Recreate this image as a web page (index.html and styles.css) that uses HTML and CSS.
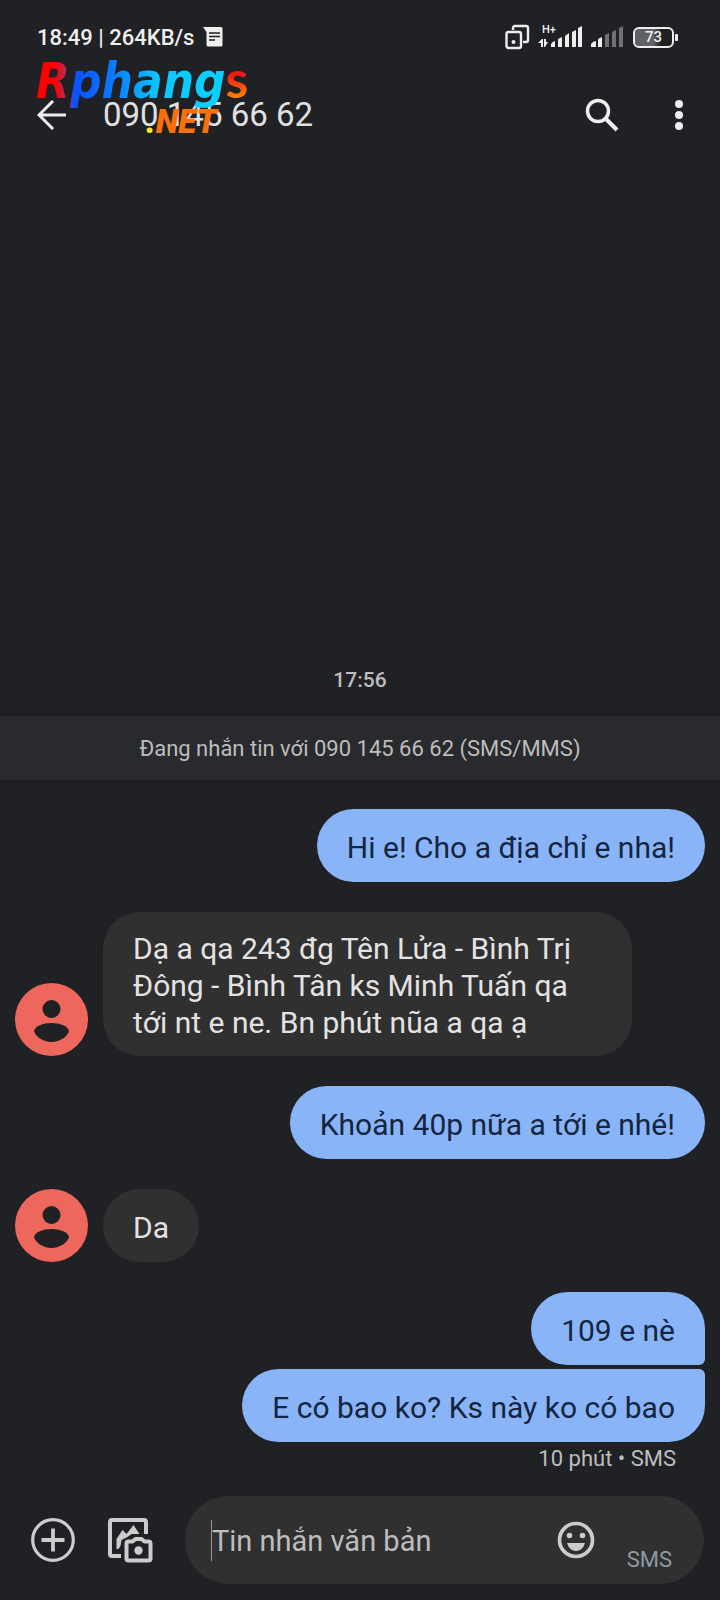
FILE: index.html
```html
<!DOCTYPE html>
<html lang="vi">
<head>
<meta charset="utf-8">
<meta name="viewport" content="width=device-width, initial-scale=1">
<title>090 145 66 62</title>
<link rel="stylesheet" href="styles.css">
</head>
<body>
<div class="phone">
  <div class="status">
    <span>18:49 | 264KB/s</span>
    <svg class="status-note" width="20" height="20" viewBox="0 0 20 20"><path fill="#eee" d="M0 0h18a1.500 1.500 0 0 1 1.500 1.500v16.500a1.500 1.500 0 0 1-1.500 1.500h-13a1.500 1.500 0 0 1-1.500-1.500v-13z"/><path stroke="#202124" stroke-width="1.500" d="M6 6h11M6 9.500h11M6 13h6"/></svg>
    <div class="status-icons">
      <svg width="25" height="26" viewBox="0 0 25 26" fill="none" stroke="#eee" stroke-width="2.400"><path d="M8 6V4q0-2 2-2h11q2 0 2 2v12q0 2-2 2h-3"/><rect x="1.500" y="8" width="14.500" height="16" rx="2"/><circle cx="8.500" cy="18" r="1" fill="#eee" stroke-width="2"/></svg>
      <div class="network">
        <span class="network-type">H+</span>
        <svg width="45" height="22" viewBox="0 0 45 22" fill="#eee"><path d="M0 17l4-4h1v8H3v-4zM6 13h2v3h2l-3 5H6zM13 18q2-3 4-3v6h-4zM20 13l4-2v10h-4zM27 10l4-3v14h-4zM34 6l4-2v17h-4zM40 2l4-2v21h-4z"/></svg>
      </div>
      <svg width="33" height="22" viewBox="0 0 33 22" fill="#eee"><path d="M0 18q2-3 5-3v6H0zM7 13l4-2v10H7z"/><path fill="#707173" d="M14 9l4-2v14h-4zM21 6l4-2v17h-4zM28 2l4-2v21h-4z"/></svg>
      <div class="battery">73</div>
    </div>
  </div>

  <header class="bar">
    <button class="icon-button" aria-label="Quay lại"><svg width="30" height="30" viewBox="0 0 30 30" fill="none" stroke="#eee" stroke-width="3"><path d="M29 15H2M16 1L2 15l14 14"/></svg></button>
    <h1 class="contact">090 145 66 62</h1>
    <button class="icon-button" aria-label="Tìm kiếm"><svg width="34" height="34" viewBox="0 0 34 34" fill="none" stroke="#eee"><circle cx="13" cy="13" r="10.500" stroke-width="3.500"/><path stroke-width="4" d="M20.500 20.500l11.500 11.500"/></svg></button>
    <button class="icon-button menu" aria-label="Tùy chọn khác"><svg width="8" height="32" viewBox="0 0 8 32" fill="#eee"><circle cx="4" cy="5" r="4"/><circle cx="4" cy="16" r="4"/><circle cx="4" cy="27" r="4"/></svg></button>
    <div class="logo"><span class="logo-name">Rphang</span><span class="logo-end">s</span><span class="logo-net"><span class="logo-dot">.</span>NET</span></div>
  </header>

  <main class="chat">
    <time class="time">17:56</time>
    <p class="notice">Đang nhắn tin với 090 145 66 62 (SMS/MMS)</p>
    <div class="messages">
      <p class="bubble sent">Hi e! Cho a địa chỉ e nha!</p>
      <div class="received">
        <svg class="avatar" viewBox="0 0 73 73"><circle cx="36.500" cy="36.500" r="36.500" fill="#ee675c"/><circle cx="36.500" cy="26" r="9" fill="#202124"/><path fill="#202124" d="M19 48C20 43 28 40 36.500 40S53 43 54 48C53 53 45 59 36.500 59S20 53 19 48z"/></svg>
        <p class="bubble">Dạ a qa 243 đg Tên Lửa - Bình Trị Đông - Bình Tân ks Minh Tuấn qa tới nt e ne. Bn phút nũa a qa ạ</p>
      </div>
      <p class="bubble sent">Khoản 40p nữa a tới e nhé!</p>
      <div class="received">
        <svg class="avatar" viewBox="0 0 73 73"><circle cx="36.500" cy="36.500" r="36.500" fill="#ee675c"/><circle cx="36.500" cy="26" r="9" fill="#202124"/><path fill="#202124" d="M19 48C20 43 28 40 36.500 40S53 43 54 48C53 53 45 59 36.500 59S20 53 19 48z"/></svg>
        <p class="bubble">Da</p>
      </div>
      <div class="group">
        <p class="bubble sent first">109 e nè</p>
        <p class="bubble sent last">E có bao ko? Ks này ko có bao</p>
        <p class="meta">10 phút • SMS</p>
      </div>
    </div>
  </main>

  <footer class="compose">
    <button class="icon-button" aria-label="Thêm"><svg width="44" height="44" viewBox="0 0 44 44" fill="none" stroke="#ccc"><circle cx="22" cy="22" r="20.300" stroke-width="3.200"/><path stroke-width="3.800" d="M22 10.500v23M10.500 22h23"/></svg></button>
    <button class="icon-button gallery" aria-label="Thư viện ảnh"><svg width="45" height="45" viewBox="0 0 45 45" fill="none" stroke="#ccc" stroke-width="4" stroke-linejoin="round"><path d="M38 16V4q0-2-2-2H4Q2 2 2 4v32q0 2 2 2h9"/><path fill="#ccc" stroke="none" d="M8.500 31V21l6-9 4 4 7-9 6 9h-8l-4 3-6 3-1 6-2 3z"/><path d="M18.500 25.500q0-2 2-2h4l3-2.500h6l3 2.500h4q2 0 2 2v15q0 2-2 2h-20q-2 0-2-2z"/><circle cx="30.500" cy="32.500" r="4.200" fill="#ccc" stroke="none"/></svg></button>
    <div class="field">
      <input class="input" type="text" placeholder="Tin nhắn văn bản" aria-label="Tin nhắn văn bản">
      <button class="icon-button" aria-label="Biểu tượng cảm xúc"><svg width="38" height="38" viewBox="0 0 38 38" fill="#ccc"><circle cx="19" cy="19" r="16.500" fill="none" stroke="#ccc" stroke-width="3.700"/><circle cx="12.500" cy="14.500" r="2.800"/><circle cx="25.500" cy="14.500" r="2.800"/><path d="M10 22h18q-2.500 8-9 8t-9-8z"/></svg></button>
      <button class="send">SMS</button>
    </div>
  </footer>
</div>
</body>
</html>
```
FILE: styles.css
```css
* { box-sizing: border-box; }
body { margin: 0; background: #202124; color: #e8e8e8; font-family: Roboto, "Noto Sans", sans-serif; }
h1, p { margin: 0; font-weight: 400; }
svg { display: block; flex: none; }
button { border: 0; padding: 0; background: none; color: inherit; font: inherit; }
.phone { display: flex; flex-direction: column; min-height: 100vh; }

.status { display: flex; align-items: center; height: 74px; padding: 0 42px 0 37px; font-size: 22px; font-weight: 500; color: #eee; }
.status-note { margin-left: 9px; }
.status-icons { display: flex; align-items: center; gap: 8px; margin-left: auto; }
.network { position: relative; }
.network-type { position: absolute; left: 4px; top: -2px; font-size: 11px; line-height: 11px; }
.battery { position: relative; width: 41px; height: 21px; margin: 0 4px 0 1px; border: 2px solid #eee; border-radius: 6px; background: linear-gradient(90deg, #606163 50%, #202124 70%) padding-box; font-size: 15px; line-height: 17px; font-weight: 500; text-align: center; }
.battery::after { content: ""; position: absolute; right: -6px; top: 5px; width: 3px; height: 7px; border-radius: 1px; background: #eee; }

.bar { position: relative; display: flex; align-items: center; height: 82px; padding: 0 37px; }
.contact { flex: 1; margin-left: 36px; font-size: 33px; line-height: 40px; color: #e0e0e0; }
.menu { margin-left: 56px; }
.logo { position: absolute; left: 36px; top: -26px; height: 82px; font-family: "DejaVu Sans Condensed", "DejaVu Sans", sans-serif; font-weight: 700; line-height: 60px; white-space: nowrap; }
.logo-name { font-size: 49px; font-style: italic; color: transparent; background: linear-gradient(90deg, #f00 10%, #b03058 16%, #0a50ff 20%, #0a78ff 40%, #0cc8ff 65%, #0cd0ff); background-clip: text; -webkit-background-clip: text; }
.logo-end { font-family: Lato, sans-serif; font-size: 52px; color: transparent; background: linear-gradient(#f01818 45%, #ff8000 80%); background-clip: text; -webkit-background-clip: text; }
.logo-net { position: absolute; left: 110px; top: 54px; font-family: Roboto, sans-serif; font-size: 33px; line-height: 40px; font-weight: 900; font-style: italic; color: #f97006; }
.logo-dot { color: #ffe92e; }

.chat { flex: 1; display: flex; flex-direction: column; justify-content: flex-end; }
.time { margin-bottom: 22px; text-align: center; font-size: 21px; line-height: 28px; font-weight: 500; color: #bdbdbd; }
.notice { padding: 19px 18px 17px; background: #292a2d; text-align: center; font-size: 22px; line-height: 28px; color: #bdbdbd; }
.messages { display: flex; flex-direction: column; gap: 30px; padding: 29px 15px 24px; }
.bubble { display: flex; align-items: center; min-height: 73px; padding: 18px 30px 15px; border-radius: 37px; background: #303030; font-size: 30px; line-height: 37px; color: #e3e3e3; }
.sent { align-self: flex-end; background: #8ab4f8; color: #14253f; }
.received { display: flex; align-items: flex-end; gap: 15px; }
.received .bubble { max-width: 529px; }
.avatar { width: 73px; height: 73px; }
.group { display: flex; flex-direction: column; gap: 4px; }
.first { border-bottom-right-radius: 6px; }
.last { border-top-right-radius: 6px; }
.meta { padding-right: 29px; text-align: right; font-size: 22px; line-height: 26px; color: #bdbdbd; }

.compose { display: flex; align-items: center; padding: 0 16px 16px 31px; }
.gallery { margin-left: 33px; }
.field { flex: 1; min-width: 0; display: flex; align-items: center; height: 88px; margin-left: 32px; padding: 0 32px 0 26px; border-radius: 44px; background: #303030; }
.input { flex: 1; min-width: 0; height: 41px; padding: 2px 0 0; border: 0; border-left: 1px solid #999; outline: 0; background: none; color: #e3e3e3; font: inherit; font-size: 29px; }
.input::placeholder { color: #bdbdbd; opacity: 1; }
.send { align-self: flex-end; margin: 0 0 11px 32px; font-size: 22px; line-height: 26px; color: #8d9aa3; }
```
